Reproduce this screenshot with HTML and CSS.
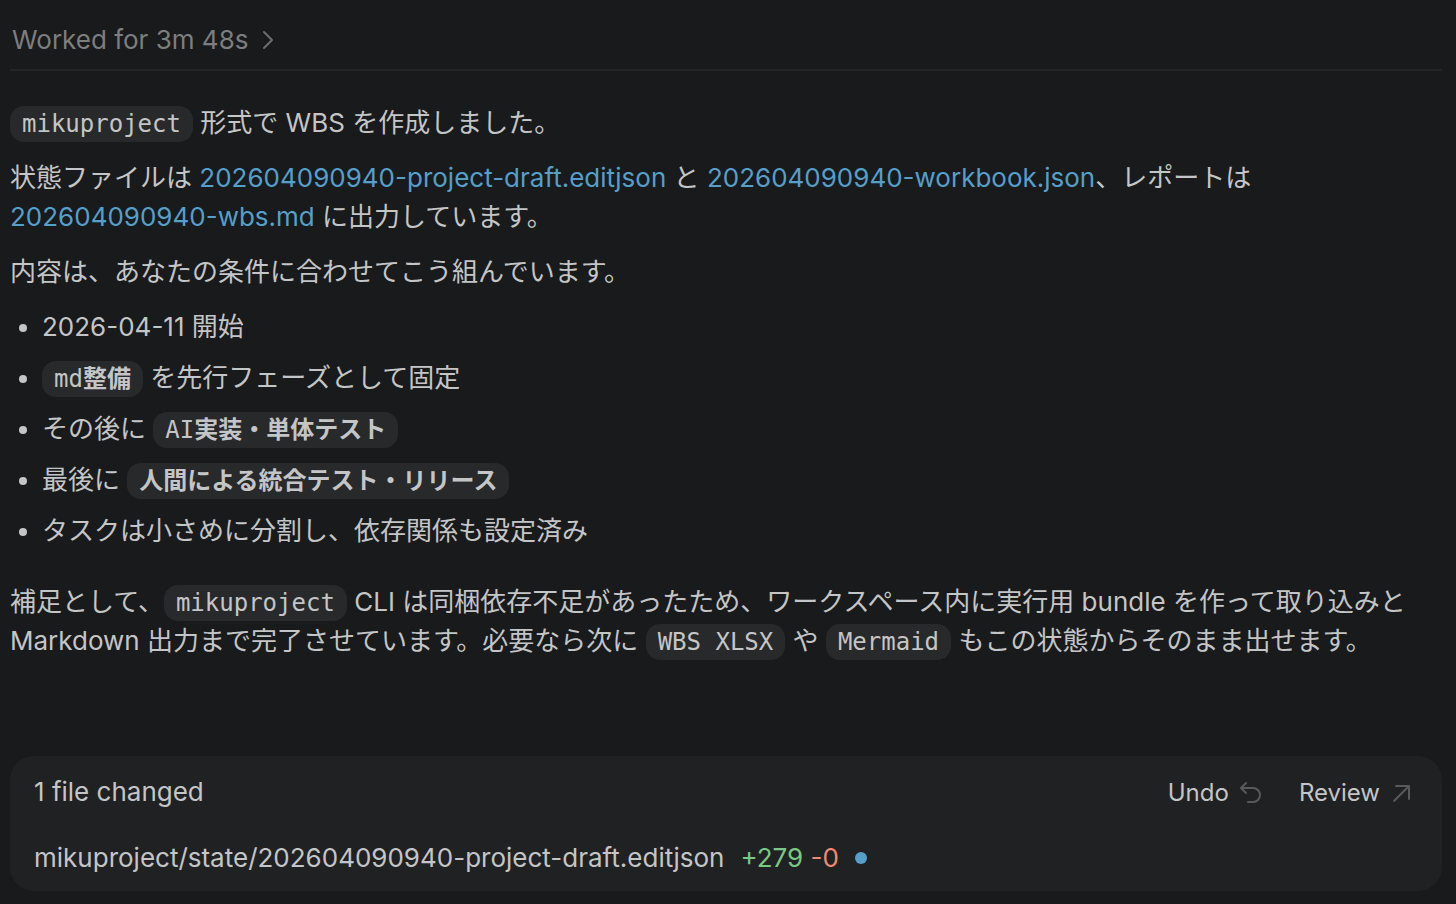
FILE: index.html
```html
<!DOCTYPE html>
<html lang="ja">
<head>
    <meta charset="UTF-8">
    <meta name="viewport" content="width=device-width, initial-scale=1.0">
    <title>mikuproject WBS</title>
    <link rel="stylesheet" href="styles.css">
</head>
<body>

    <header>
        <button class="worked" type="button">
            Worked for 3m 48s
            <svg class="chevron" viewBox="0 0 12 20" aria-hidden="true"><path d="M2 2l8 8-8 8"/></svg>
        </button>
    </header>

    <main class="message">
        <p><code>mikuproject</code> 形式で WBS を作成しました。</p>
        <p>状態ファイルは <a href="#">202604090940-project-draft.editjson</a> と <a href="#">202604090940-workbook.json</a>、レポートは<br>
            <a href="#">202604090940-wbs.md</a> に出力しています。</p>
        <p>内容は、あなたの条件に合わせてこう組んでいます。</p>
        <ul>
            <li>2026-04-11 開始</li>
            <li><code>md<b>整備</b></code> を先行フェーズとして固定</li>
            <li>その後に <code>AI<b>実装・単体テスト</b></code></li>
            <li>最後に <code><b>人間による統合テスト・リリース</b></code></li>
            <li>タスクは小さめに分割し、依存関係も設定済み</li>
        </ul>
        <p>補足として、<code>mikuproject</code> CLI は同梱依存不足があったため、ワークスペース内に実行用 bundle を作って取り込みと<br>
            Markdown 出力まで完了させています。必要なら次に <code>WBS XLSX</code> や <code>Mermaid</code> もこの状態からそのまま出せます。</p>
    </main>

    <!-- Changed files -->
    <section class="changes">
        <div class="changes-head">
            <span class="changes-title">1 file changed</span>
            <button type="button">
                Undo
                <svg viewBox="0 0 22 22" aria-hidden="true"><path d="M7 1L2 6l5 5M2 6h12a7 7 0 0 1 0 14H9"/></svg>
            </button>
            <button type="button">
                Review
                <svg viewBox="0 0 22 22" aria-hidden="true"><path d="M4 19L19 4M6 4h13v13"/></svg>
            </button>
        </div>
        <div class="file">
            <span>mikuproject/state/202604090940-project-draft.editjson</span>
            <span class="counts"><span class="added">+279</span> <span class="removed">-0</span></span>
            <span class="dot"></span>
        </div>
    </section>

</body>
</html>
```
FILE: styles.css
```css
* {
    box-sizing: border-box;
}

body {
    background-color: #191a1c;
    color: #c4c5c6;
    font-family: Inter, 'Noto Sans CJK JP', sans-serif;
    font-size: 26px;
    line-height: 39px;
    margin: 0;
    padding: 10px 14px 14px 10px;
}

button {
    background: none;
    border: none;
    padding: 0;
    color: inherit;
    font: inherit;
    cursor: pointer;
    display: flex;
    align-items: center;
}

svg {
    fill: none;
    stroke: #58595a;
    stroke-width: 2;
    stroke-linecap: round;
    stroke-linejoin: round;
}

header {
    padding: 10px 2px;
    border-bottom: 2px solid #242527;
}

.worked {
    color: #7d7e7f;
    gap: 14px;
}

.chevron {
    width: 12px;
    height: 20px;
    stroke: #6c6d6e;
}

.message {
    padding-top: 32px;
}

p {
    margin: 0 0 16px;
}

a {
    color: #559fcb;
    text-decoration: none;
}

code {
    background-color: #28292b;
    border-radius: 14px;
    padding: 4px 12px;
    font-family: 'DejaVu Sans Mono', 'Noto Sans CJK JP', monospace;
    font-size: 24px;
    line-height: 24px;
}

ul {
    margin: 0 0 32px;
    padding-left: 32px;
}

li {
    margin-bottom: 12px;
}

.changes {
    background-color: #202123;
    border-radius: 24px;
    margin-top: 96px;
    padding: 16px 30px 14px 24px;
}

.changes-head {
    display: flex;
    align-items: baseline;
    gap: 38px;
    margin-bottom: 26px;
}

.changes-head button {
    gap: 10px;
    font-size: 24px;
}

.changes-head svg {
    width: 22px;
    height: 22px;
}

.changes-title {
    flex: 1;
}

.file {
    display: flex;
    align-items: center;
    gap: 16px;
}

.added {
    color: #77ca83;
}

.removed {
    color: #f18970;
}

.dot {
    width: 12px;
    height: 12px;
    border-radius: 50%;
    background-color: #559fcb;
}
```
